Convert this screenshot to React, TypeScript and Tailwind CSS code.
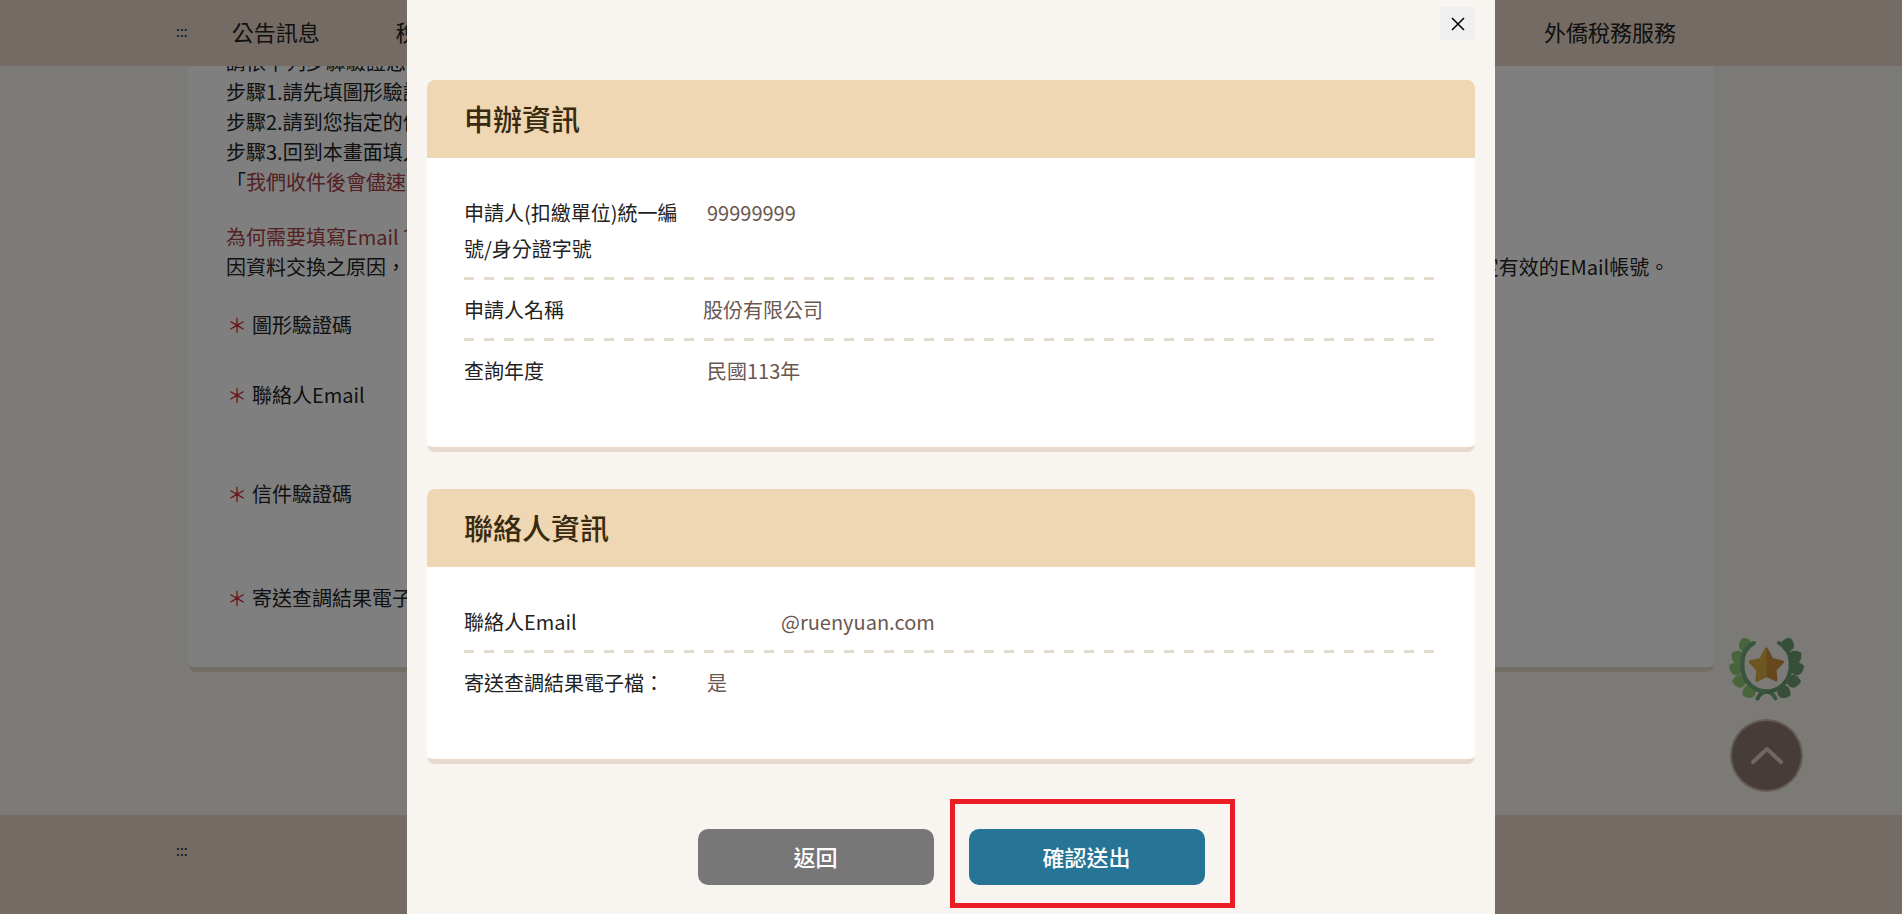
import clsx from "clsx";

type Row = {
  label: string;
  value: string;
  indent: string;
};

const applyRows: Row[] = [
  { label: "申請人(扣繳單位)統一編號/身分證字號", value: "99999999", indent: "pl-1" },
  { label: "申請人名稱", value: "股份有限公司", indent: "pl-0" },
  { label: "查詢年度", value: "民國113年", indent: "pl-1" },
];

const contactRows: Row[] = [
  { label: "聯絡人Email", value: "@ruenyuan.com", indent: "pl-[78px]" },
  { label: "寄送查調結果電子檔：", value: "是", indent: "pl-1" },
];

const InfoCard = ({ title, rows }: { title: string; rows: Row[] }) => (
  <section className="overflow-hidden rounded-lg border-b-[5px] border-[#e7dacd] bg-white">
    <h2 className="bg-[#eed7b2] px-[37px] pt-[17px] pb-[19px] text-[29px] leading-[42px] font-medium text-[#38290f]">
      {title}
    </h2>
    <dl className="px-[37px] pt-[25px] pb-12">
      {rows.map((row, i) => (
        <div key={row.label}>
          <div className="flex pt-3 pb-[10px] text-xl leading-9">
            <dt className="mr-4 w-[223px] shrink-0 text-[#222222]">{row.label}</dt>
            <dd className={clsx("text-[#6b5750]", row.indent)}>{row.value}</dd>
          </div>
          {i < rows.length - 1 && (
            <div className="h-[3px] bg-[repeating-linear-gradient(90deg,#e1dccf_0_10px,transparent_10px_20px)]" />
          )}
        </div>
      ))}
    </dl>
  </section>
);

const Field = ({ label, className }: { label: string; className: string }) => (
  <p className={clsx("flex gap-[5px] pl-px", className)}>
    <span className="text-[#d6263c]">＊</span>
    {label}
  </p>
);

const leaves = [
  { x: 18, y: 13, r: -12 },
  { x: 14, y: 23, r: -48 },
  { x: 13, y: 33, r: -64 },
  { x: 17, y: 43, r: -88 },
  { x: 26, y: 51, r: -112 },
];

const Leaves = ({ color }: { color: string }) => (
  <g fill={color}>
    {leaves.map((l) => (
      <path
        key={l.y}
        transform={`translate(${l.x} ${l.y}) rotate(${l.r})`}
        d="M0 1C-9 -2 -9 -9 -1 -14C8 -10 9 -4 0 1Z"
      />
    ))}
  </g>
);

const Wreath = () => (
  <svg viewBox="0 0 75 64" className="h-16 w-[75px]" aria-hidden="true">
    <Leaves color="#92cb78" />
    <g transform="translate(75 0) scale(-1 1)">
      <Leaves color="#6f9f72" />
    </g>
    <g fill="none" strokeWidth="4" strokeLinecap="round">
      <path
        d="M25 5C15 10 12.500 20 13.500 31C15 44 25 53 37 53.500C42 54 45 57 46.500 60.500"
        stroke="#74ab7c"
      />
      <path
        d="M50 5C60 10 62.500 20 61.500 31C60 44 50 53 38 53.500C33 54 30 57 28.500 60.500"
        stroke="#6a9f74"
      />
      <path d="M25 5C15 10 12.500 20 13.500 31C15 44 25 53 37 53.500" stroke="#74ab7c" strokeLinecap="butt" />
    </g>
    <path
      d="M37.500 11L43 21.500L53.500 24L46 32L47 42L37.500 37.500L28 42L29 32L21.500 24L32 21.500Z"
      fill="#cf903c"
      stroke="#cf903c"
      strokeWidth="3"
      strokeLinejoin="round"
    />
    <path
      d="M37.500 9.500C36.500 9.500 36 10 31 20.200L21 22.600C20 23 19.500 24 20.500 25L27.500 32.500L26.500 42C26.500 43.500 28 44 29 43.300L37.500 39.200Z"
      fill="#d9ae45"
    />
  </svg>
);

const Background = () => (
  <div className="flex min-h-screen flex-col bg-[#f7f4ef] text-[#222222]">
    <header className="fixed inset-x-0 top-0 z-10 flex h-[66px] items-center bg-[#e9d8c9] pr-[226px] pb-1 pl-44">
      <a href="#top" className="text-sm">
        :::
      </a>
      <nav className="ml-11 flex flex-1 gap-[76px] text-[22px]">
        <a href="#news">公告訊息</a>
        <a href="#tax">稅務資訊</a>
        <a href="#foreign" className="ml-auto">
          外僑稅務服務
        </a>
      </nav>
    </header>
    <main className="px-[188px] pb-[143px]">
      <div className="rounded-b-lg border-b-[5px] border-[#e7dacd] bg-white px-[38px] pt-[47px] pb-[54px] text-xl leading-[30px]">
        <p>請依下列步驟驗證您的電子郵件：</p>
        <p>步驟1.請先填圖形驗證碼</p>
        <p>步驟2.請到您指定的信箱收信</p>
        <p>步驟3.回到本畫面填入驗證碼</p>
        <p>
          「<span className="text-[#a94044]">我們收件後會儘速處理</span>」
        </p>
        <p className="mt-[25px] text-[#a94044]">為何需要填寫Email？</p>
        <p>
          因資料交換之原因，因此將以電子郵件寄送查調結果，為確保您能順利收到驗證碼及相關通知，請勿使用免費或已停用之信箱，填寫Email請確定有效的EMail帳號。
        </p>
        <Field label="圖形驗證碼" className="mt-7" />
        <Field label="聯絡人Email" className="mt-10" />
        <Field label="信件驗證碼" className="mt-[69px]" />
        <Field label="寄送查調結果電子檔" className="mt-[74px]" />
      </div>
    </main>
    <footer className="min-h-[99px] flex-1 bg-[#e9d8c9] pt-[22px] pl-44">
      <a href="#footer" className="text-sm">
        :::
      </a>
    </footer>
    <div className="fixed right-[98px] bottom-[122px] flex flex-col items-center gap-[17px]">
      <Wreath />
      <button
        type="button"
        aria-label="回到頂端"
        className="flex size-[73px] items-center justify-center rounded-full border-2 border-[#f5dfd2]/60 bg-[#8c7870]"
      >
        <svg viewBox="0 0 34 20" className="h-5 w-[34px]" fill="none" aria-hidden="true">
          <path
            d="M3 16L17 3L31 16"
            stroke="#e0cfc8"
            strokeWidth="4"
            strokeLinecap="round"
            strokeLinejoin="round"
          />
        </svg>
      </button>
    </div>
  </div>
);

export default function App() {
  return (
    <div
      lang="zh-Hant"
      className="font-['Noto_Sans_CJK_TC','Noto_Sans',sans-serif]"
    >
      <Background />
      <div className="fixed inset-0 z-20 flex justify-center overflow-hidden bg-black/50">
        <div
          role="dialog"
          aria-modal="true"
          className="w-full max-w-[1088px] bg-[#f8f4ef] px-5 pt-[7px]"
        >
          <div className="mb-10 flex justify-end">
            <button
              type="button"
              aria-label="關閉"
              className="flex h-[33px] w-[35px] items-center justify-center bg-[#efefef]"
            >
              <svg viewBox="0 0 14 14" className="size-3.5" aria-hidden="true">
                <path d="M1 1L13 13M13 1L1 13" stroke="#000000" strokeWidth="1.500" />
              </svg>
            </button>
          </div>
          <div className="flex flex-col gap-[37px]">
            <InfoCard title="申辦資訊" rows={applyRows} />
            <InfoCard title="聯絡人資訊" rows={contactRows} />
          </div>
          <div className="mt-[65px] flex justify-center gap-[35px] text-[22px] font-medium text-white">
            <button type="button" className="h-14 w-[236px] rounded-[10px] bg-[#777777] pb-0.5">
              返回
            </button>
            <div className="relative">
              <button type="submit" className="h-14 w-[236px] rounded-[10px] bg-[#277596] pb-0.5">
                確認送出
              </button>
              <div className="pointer-events-none absolute -top-[30px] -right-[30px] -bottom-[23px] -left-[19px] border-[5px] border-[#ea1c24]" />
            </div>
          </div>
        </div>
      </div>
    </div>
  );
}
